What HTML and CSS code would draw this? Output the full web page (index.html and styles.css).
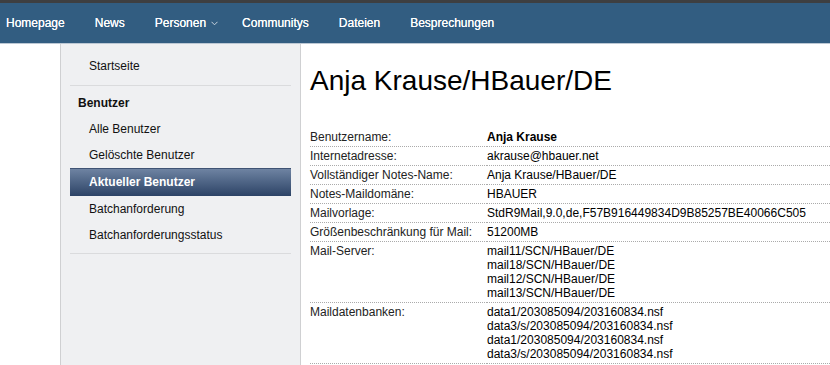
FILE: index.html
```html
<!DOCTYPE html>
<html lang="de">
<head>
<meta charset="utf-8">
<title>Anja Krause/HBauer/DE</title>
<link rel="stylesheet" href="styles.css">
</head>
<body>
<nav class="topnav">
  <a class="nav-item first" href="#">Homepage</a>
  <a class="nav-item" href="#">News</a>
  <a class="nav-item has-menu" href="#">Personen <svg class="chev" width="7" height="5" viewBox="0 0 7 5"><path d="M0.5 0.8 L3.5 3.8 L6.5 0.8" fill="none" stroke="#c8d3de" stroke-width="1"/></svg></a>
  <a class="nav-item" href="#">Communitys</a>
  <a class="nav-item" href="#">Dateien</a>
  <a class="nav-item" href="#">Besprechungen</a>
</nav>
<div class="layout">
  <div class="spacer"></div>
  <aside class="sidebar">
    <ul class="menu">
      <li class="menu-item">Startseite</li>
    </ul>
    <div class="sep"></div>
    <div class="menu-head">Benutzer</div>
    <ul class="menu">
      <li class="menu-item">Alle Benutzer</li>
      <li class="menu-item">Gelöschte Benutzer</li>
      <li class="menu-item active">Aktueller Benutzer</li>
      <li class="menu-item">Batchanforderung</li>
      <li class="menu-item">Batchanforderungsstatus</li>
    </ul>
    <div class="sep sep-bottom"></div>
  </aside>
  <main class="content">
    <h1 class="title">Anja Krause/HBauer/DE</h1>
    <table class="details">
      <tr><td class="label">Benutzername:</td><td class="value strong">Anja Krause</td></tr>
      <tr><td class="label">Internetadresse:</td><td class="value">akrause@hbauer.net</td></tr>
      <tr><td class="label">Vollständiger Notes-Name:</td><td class="value">Anja Krause/HBauer/DE</td></tr>
      <tr><td class="label">Notes-Maildomäne:</td><td class="value">HBAUER</td></tr>
      <tr><td class="label">Mailvorlage:</td><td class="value">StdR9Mail,9.0,de,F57B916449834D9B85257BE40066C505</td></tr>
      <tr><td class="label">Größenbeschränkung für Mail:</td><td class="value">51200MB</td></tr>
      <tr><td class="label">Mail-Server:</td><td class="value">mail11/SCN/HBauer/DE<br>mail18/SCN/HBauer/DE<br>mail12/SCN/HBauer/DE<br>mail13/SCN/HBauer/DE</td></tr>
      <tr><td class="label">Maildatenbanken:</td><td class="value">data1/203085094/203160834.nsf<br>data3/s/203085094/203160834.nsf<br>data1/203085094/203160834.nsf<br>data3/s/203085094/203160834.nsf</td></tr>
    </table>
  </main>
</div>
</body>
</html>
```
FILE: styles.css
```css
html, body {
  margin: 0;
  padding: 0;
  background: #ffffff;
  font-family: "Liberation Sans", Arial, sans-serif;
  font-size: 12px;
  color: #1a1a1a;
}

.topnav {
  display: flex;
  align-items: center;
  height: 40px;
  background: #325d81;
  border-top: 3px solid #3e3f41;
  border-bottom: 1px solid #bcc8d4;
}

.nav-item {
  display: flex;
  align-items: center;
  padding: 0 15px;
  color: #ffffff;
  text-decoration: none;
  font-size: 12px;
  white-space: nowrap;
  text-shadow: 0 0 0.5px #ffffff;
}

.nav-item.first {
  padding-left: 6px;
}

.nav-item.has-menu {
  padding-right: 9px;
}

.chev {
  margin-left: 5px;
  margin-top: 1px;
}

.layout {
  display: flex;
  align-items: stretch;
  min-height: 321px;
}

.spacer {
  width: 60px;
  flex: none;
}

.sidebar {
  width: 221px;
  flex: none;
  background: #eff0f2;
  border-left: 1px solid #cfd0d2;
  border-right: 1px solid #cfd0d2;
  padding: 9px 9px 0 9px;
}

.menu {
  list-style: none;
  margin: 0;
  padding: 0;
}

.menu-item {
  height: 26px;
  line-height: 26px;
  padding-left: 19px;
  color: #111111;
}

.menu-item.active {
  height: 27px;
  line-height: 27px;
  border-top: 1px solid #3f5374;
  background: linear-gradient(#6e83a2, #2c4366);
  color: #ffffff;
  font-weight: bold;
}

.sep {
  height: 1px;
  background: #dadbdd;
  margin-top: 6px;
}

.sep-bottom {
  margin-top: 5px;
}

.menu-head {
  margin-top: 4px;
  height: 26px;
  line-height: 26px;
  padding-left: 8px;
  font-weight: bold;
  color: #111111;
}

.content {
  flex: 1;
  padding: 0 0 0 9px;
  min-width: 0;
}

.title {
  margin: 21px 0 0 0;
  font-size: 28px;
  line-height: 32px;
  font-weight: normal;
  color: #000000;
}

.details {
  width: 100%;
  border-collapse: collapse;
  margin-top: 31px;
}

.details td {
  padding: 2px 0 2px 0;
  line-height: 14px;
  vertical-align: top;
  border-bottom: 1px dotted #ababab;
}

.details .label {
  width: 177px;
  color: #222222;
}

.details .value {
  color: #000000;
}

.details .strong {
  font-weight: bold;
}
```
